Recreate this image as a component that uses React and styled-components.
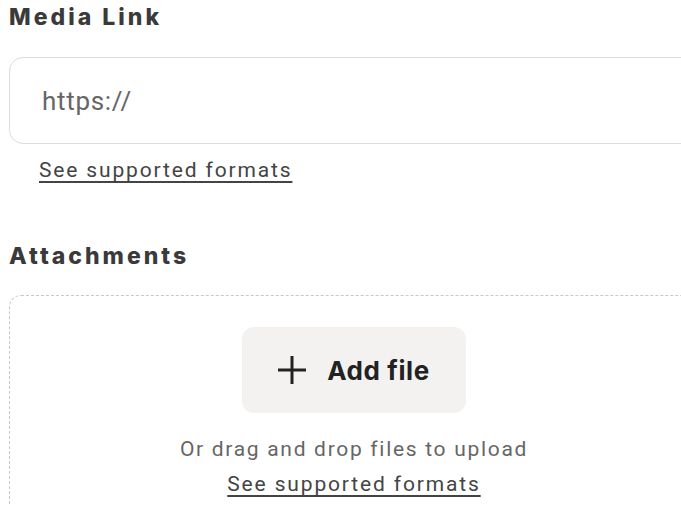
import React from "react";
import styled, { createGlobalStyle } from "styled-components";

const Global = createGlobalStyle`
  html, body { margin: 0; padding: 0; background: #ffffff; overflow: hidden; }
  body { font-family: Roboto, "Liberation Sans", sans-serif; }
`;

const Page = styled.div`
  width: 690px;
  padding-left: 9px;
  display: flex;
  flex-direction: column;
`;

const Heading = styled.h2`
  margin: ${(p) => p.$top}px 0 0 0;
  font-family: Inter, "Noto Sans", sans-serif;
  font-weight: 800;
  font-size: 23px;
  line-height: 28px;
  letter-spacing: 3px;
  color: #3a3a3a;
`;

const UrlField = styled.div`
  margin-top: 26px;
  height: 87px;
  box-sizing: border-box;
  border: 1.5px solid #dcdcdc;
  border-radius: 14px;
  display: flex;
  align-items: center;
  padding-left: 32px;
`;

const UrlInput = styled.input`
  border: none;
  outline: none;
  background: transparent;
  width: 100%;
  font-family: Roboto, sans-serif;
  font-size: 26px;
  letter-spacing: 0.7px;
  color: #666666;
  padding: 0;
  &::placeholder { color: #666666; }
`;

const FormatsLink = styled.a`
  align-self: ${(p) => (p.$center ? "center" : "flex-start")};
  margin: ${(p) => p.$margin};
  font-family: Roboto, sans-serif;
  font-size: 21px;
  line-height: 24px;
  letter-spacing: 1.85px;
  color: #444444;
  text-decoration: underline;
  text-decoration-thickness: 1.5px;
  text-underline-offset: 4px;
  cursor: pointer;
`;

const DropZone = styled.div`
  margin-top: 25px;
  height: 240px;
  box-sizing: border-box;
  border: 1px dashed #c8c8c8;
  border-radius: 12px;
  display: flex;
  flex-direction: column;
  align-items: center;
  padding-top: 31px;
`;

const AddButton = styled.button`
  width: 224px;
  height: 86px;
  border: none;
  border-radius: 12px;
  background: #f3f2f1;
  display: flex;
  align-items: center;
  justify-content: center;
  gap: 21px;
  font-family: Inter, "Noto Sans", sans-serif;
  font-weight: 700;
  font-size: 26px;
  letter-spacing: 0.6px;
  color: #222222;
  cursor: pointer;
  padding: 0;
`;

const DropHint = styled.p`
  margin: 24px 0 0 0;
  font-family: Roboto, sans-serif;
  font-size: 21px;
  line-height: 24px;
  letter-spacing: 1.7px;
  color: #666666;
`;

const PlusIcon = () => (
  <svg width="28" height="28" viewBox="0 0 28 28" aria-hidden="true">
    <path d="M14 0V28M0 14H28" stroke="#222" strokeWidth="3" fill="none" />
  </svg>
);

export default function App() {
  return (
    <>
      <Global />
      <Page>
        <Heading $top={3}>Media Link</Heading>
        <UrlField>
          <UrlInput placeholder="https://" />
        </UrlField>
        <FormatsLink $margin="14px 0 0 30px">See supported formats</FormatsLink>
        <Heading $top={60}>Attachments</Heading>
        <DropZone>
          <AddButton>
            <PlusIcon />
            Add file
          </AddButton>
          <DropHint>Or drag and drop files to upload</DropHint>
          <FormatsLink $center $margin="11px 0 0 0">See supported formats</FormatsLink>
        </DropZone>
      </Page>
    </>
  );
}
